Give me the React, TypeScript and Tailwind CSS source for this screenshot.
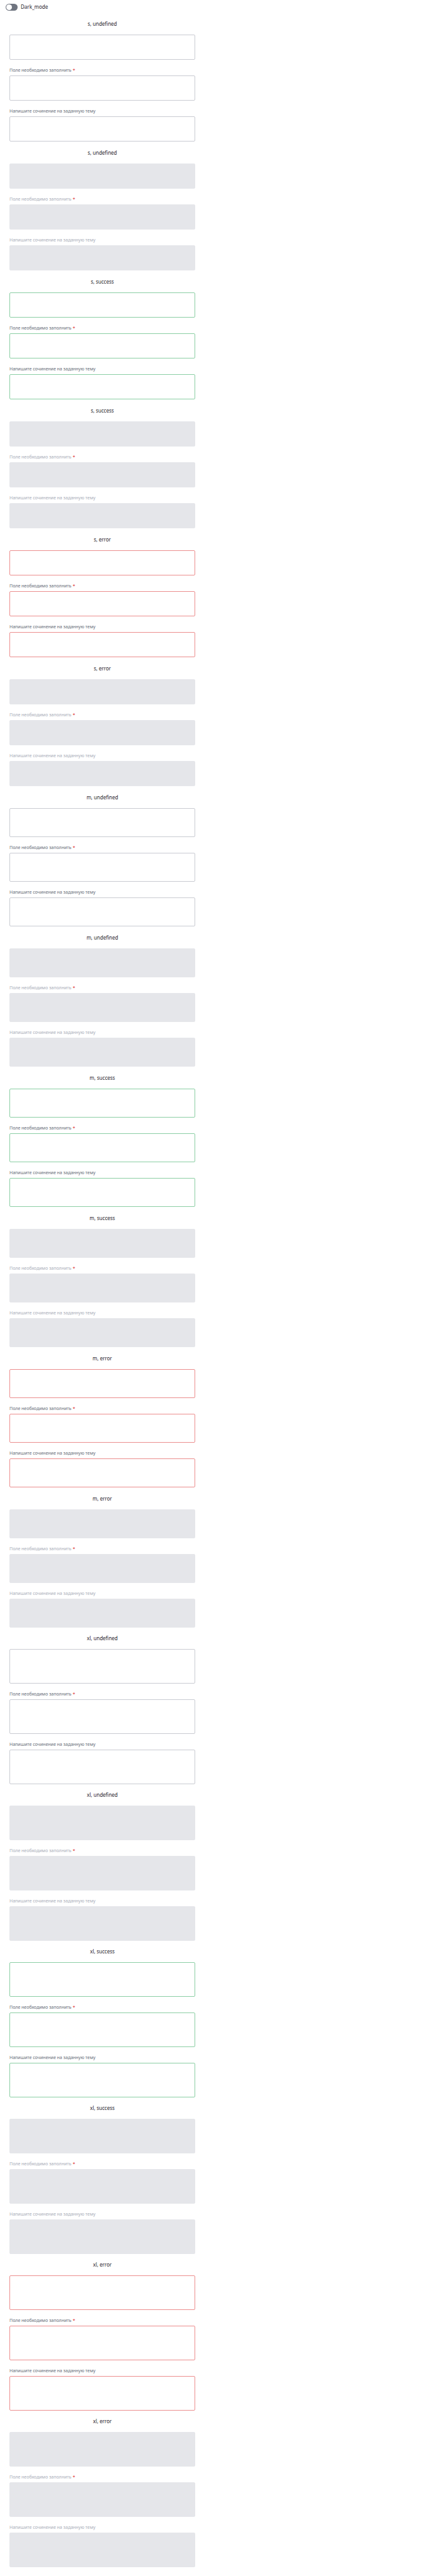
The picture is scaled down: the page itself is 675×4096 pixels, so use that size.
import { useId, useState } from "react";

type Size = "s" | "m" | "xl";
type Status = "undefined" | "success" | "error";

const sizes: Size[] = ["s", "m", "xl"];
const statuses: Status[] = ["undefined", "success", "error"];

const boxHeight: Record<Size, string> = { s: "h-[40px]", m: "h-[46px]", xl: "h-[55px]" };
const titleHeight: Record<Size, string> = { s: "h-[35px]", m: "h-[35px]", xl: "h-[34px]" };
const borderColor: Record<Status, string> = {
  undefined: "border-[#c9cbd2]",
  success: "border-[#8bcea4]",
  error: "border-[#ec8e8e]",
};

interface FieldProps {
  size: Size;
  status: Status;
  disabled: boolean;
  label?: string;
  required?: boolean;
}

function Field({ size, status, disabled, label, required }: FieldProps) {
  const id = useId();
  const look = disabled ? "border-[#e5e6ea] bg-[#e5e6ea]" : `bg-white ${borderColor[status]}`;
  return (
    <div className="flex flex-col">
      {label && (
        <label
          htmlFor={id}
          className={`flex h-[25px] items-center pt-[9px] text-[7px] leading-[10px] ${disabled ? "text-[#a9adb8]" : "text-[#666b76]"}`}
        >
          {label}
          {required && <span className="ml-[2px] text-[#da2020]">*</span>}
        </label>
      )}
      <textarea
        id={id}
        aria-label={label ? undefined : `${size}, ${status}`}
        disabled={disabled}
        required={required}
        className={`block w-full resize-none rounded-[2px] border px-2 py-1 text-[8px] outline-none ${boxHeight[size]} ${look}`}
      />
    </div>
  );
}

function Group({ size, status, disabled }: { size: Size; status: Status; disabled: boolean }) {
  return (
    <section>
      <h2 className={`flex items-center justify-center text-[8px] leading-[12px] ${titleHeight[size]}`}>
        {size}, {status}
      </h2>
      <Field size={size} status={status} disabled={disabled} />
      <Field size={size} status={status} disabled={disabled} label="Поле необходимо заполнить" required />
      <Field size={size} status={status} disabled={disabled} label="Напишите сочинение на заданную тему" />
    </section>
  );
}

export default function App() {
  const [dark, setDark] = useState(false);
  return (
    <main className="min-h-screen bg-white pb-[12px] font-['Noto_Sans',sans-serif] text-[#1f222b]">
      <label className="flex h-[20px] items-center gap-[5px] px-[9px] pt-[2px] text-[8px] leading-[12px]">
        <input
          type="checkbox"
          role="switch"
          checked={dark}
          onChange={(e) => setDark(e.target.checked)}
          className="h-[11px] w-[19px] appearance-none rounded-full bg-[#6f747f] p-px before:block before:size-[9px] before:rounded-full before:bg-white checked:before:ml-auto"
        />
        Dark_mode
      </label>
      <div className="w-full max-w-[325px] px-[15px]">
        {sizes.map((size) =>
          statuses.map((status) =>
            [false, true].map((disabled) => (
              <Group key={`${size}-${status}-${disabled}`} size={size} status={status} disabled={disabled} />
            )),
          ),
        )}
      </div>
    </main>
  );
}
